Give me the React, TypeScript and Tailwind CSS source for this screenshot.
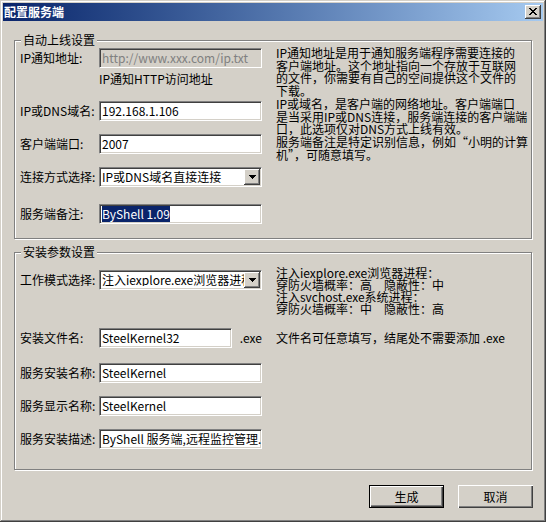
import React from "react";

const sunken =
  "h-[20px] border border-t-[#808080] border-l-[#808080] border-b-white border-r-white shadow-[inset_1px_1px_0_#404040,inset_-1px_-1px_0_#d4d0c8] flex items-center overflow-hidden whitespace-nowrap";

function Edit({
  children,
  width = "w-[163px]",
  disabled = false,
}: {
  children: React.ReactNode;
  width?: string;
  disabled?: boolean;
}) {
  return (
    <div
      className={`${sunken} ${width} pl-[2px] ${
        disabled ? "bg-[#d4d0c8] text-[#808080]" : "bg-white text-black"
      }`}
    >
      {children}
    </div>
  );
}

function Combo({ value }: { value: string }) {
  return (
    <div className={`${sunken} w-[163px] bg-white p-[1px]`}>
      <div className="flex-1 overflow-hidden whitespace-nowrap pl-[1px]">{value}</div>
      <div className="w-[16px] h-[16px] shrink-0 bg-[#d4d0c8] shadow-[inset_-1px_-1px_0_#404040,inset_1px_1px_0_#fff,inset_-2px_-2px_0_#808080] flex items-center justify-center">
        <svg width="7" height="4" viewBox="0 0 7 4" shapeRendering="crispEdges">
          <path d="M0 0h7v1H0zM1 1h5v1H1zM2 2h3v1H2zM3 3h1v1H3z" fill="#000" />
        </svg>
      </div>
    </div>
  );
}

function Row({ label, mt, children }: { label: string; mt: string; children: React.ReactNode }) {
  return (
    <div className={`flex items-center h-[20px] ${mt}`}>
      <div className="w-[79px] whitespace-nowrap">{label}</div>
      {children}
    </div>
  );
}

const groupOne = [
  "IP通知地址是用于通知服务端程序需要连接的",
  "客户端地址。这个地址指向一个存放于互联网",
  "的文件，你需要有自己的空间提供这个文件的",
  "下载。",
  "IP或域名，是客户端的网络地址。客户端端口",
  "是当采用IP或DNS连接，服务端连接的客户端端",
  "口，此选项仅对DNS方式上线有效。",
  "服务端备注是特定识别信息，例如“小明的计算",
  "机”，可随意填写。",
];

const groupTwo = [
  "注入iexplore.exe浏览器进程：",
  "穿防火墙概率：高　隐蔽性：中",
  "注入svchost.exe系统进程：",
  "穿防火墙概率：中　隐蔽性：高",
];

export default function App() {
  return (
    <div className="w-[546px] h-[522px] bg-[#d4d0c8] flex flex-col text-[12px] leading-[12px] text-black font-['Noto_Sans_CJK_SC',sans-serif] shadow-[inset_-1px_-1px_0_#404040,inset_1px_1px_0_#d4d0c8,inset_-2px_-2px_0_#808080,inset_2px_2px_0_#fff]">
      {/* title bar */}
      <div className="mx-[3px] mt-[3px] h-[18px] bg-linear-to-r from-[#0a246a] to-[#a6caf0] flex items-center justify-between pl-[1px] pr-[2px]">
        <span className="text-white font-bold">配置服务端</span>
        <div className="w-[16px] h-[14px] bg-[#d4d0c8] shadow-[inset_-1px_-1px_0_#404040,inset_1px_1px_0_#fff,inset_-2px_-2px_0_#808080] flex items-center justify-center">
          <svg width="8" height="7" viewBox="0 0 8 7" shapeRendering="crispEdges" className="-mt-[1px] -ml-[1px]">
            <path
              d="M0 0h2v1H0zM6 0h2v1H6zM1 1h2v1H1zM5 1h2v1H5zM2 2h4v1H2zM3 3h2v1H3zM2 4h4v1H2zM1 5h2v1H1zM5 5h2v1H5zM0 6h2v1H0zM6 6h2v1H6z"
              fill="#000"
            />
          </svg>
        </div>
      </div>

      <div className="px-[14px]">
        {/* group 1 */}
        <fieldset className="mt-[13px] h-[205px] border border-[#808080] shadow-[inset_1px_1px_0_#fff,1px_1px_0_#fff] pl-[5px]">
          <legend className="ml-[1px] px-[2px] leading-[12px] bg-[#d4d0c8]">自动上线设置</legend>
          <div className="flex">
            <div className="w-[242px]">
              <Row label="IP通知地址:" mt="mt-[2px]">
                <Edit disabled>http://www.xxx.com/ip.txt</Edit>
              </Row>
              <div className="mt-[5px] pl-[79px] h-[12px]">IP通知HTTP访问地址</div>
              <Row label="IP或DNS域名:" mt="mt-[16px]">
                <Edit>192.168.1.106</Edit>
              </Row>
              <Row label="客户端端口:" mt="mt-[13px]">
                <Edit>2007</Edit>
              </Row>
              <Row label="连接方式选择:" mt="mt-[13px]">
                <Combo value="IP或DNS域名直接连接" />
              </Row>
              <Row label="服务端备注:" mt="mt-[17px]">
                <Edit>
                  <span className="bg-[#0a246a] text-white h-[16px] leading-[16px] inline-block">ByShell 1.09</span>
                </Edit>
              </Row>
            </div>
            <div className="ml-[14px] mt-[1px] leading-[12.7px] whitespace-nowrap">
              {groupOne.map((l) => (
                <div key={l}>{l}</div>
              ))}
            </div>
          </div>
        </fieldset>

        {/* group 2 */}
        <fieldset className="mt-[7px] h-[224px] border border-[#808080] shadow-[inset_1px_1px_0_#fff,1px_1px_0_#fff] pl-[5px]">
          <legend className="ml-[1px] px-[2px] leading-[12px] bg-[#d4d0c8]">安装参数设置</legend>
          <div className="flex">
            <div className="w-[242px]">
              <Row label="工作模式选择:" mt="mt-[12px]">
                <Combo value="注入iexplore.exe浏览器进程" />
              </Row>
              <Row label="安装文件名:" mt="mt-[38px]">
                <Edit width="w-[133px]">SteelKernel32</Edit>
                <span className="ml-[8px]">.exe</span>
              </Row>
              <Row label="服务安装名称:" mt="mt-[15px]">
                <Edit>SteelKernel</Edit>
              </Row>
              <Row label="服务显示名称:" mt="mt-[13px]">
                <Edit>SteelKernel</Edit>
              </Row>
              <Row label="服务安装描述:" mt="mt-[13px]">
                <Edit>ByShell 服务端,远程监控管理.官方网站</Edit>
              </Row>
            </div>
            <div className="ml-[14px] mt-[9px] whitespace-nowrap">
              {groupTwo.map((l) => (
                <div key={l}>{l}</div>
              ))}
              <div className="mt-[17px]">文件名可任意填写，结尾处不需要添加 .exe</div>
            </div>
          </div>
        </fieldset>
      </div>

      {/* buttons */}
      <div className="mt-[15px] pr-[13px] flex justify-end gap-[14px]">
        <button className="w-[75px] h-[23px] bg-[#d4d0c8] border border-black shadow-[inset_1px_1px_0_#fff,inset_-1px_-1px_0_#404040,inset_-2px_-2px_0_#808080]">
          生成
        </button>
        <button className="w-[75px] h-[23px] bg-[#d4d0c8] shadow-[inset_1px_1px_0_#fff,inset_-1px_-1px_0_#404040,inset_-2px_-2px_0_#808080]">
          取消
        </button>
      </div>
    </div>
  );
}
